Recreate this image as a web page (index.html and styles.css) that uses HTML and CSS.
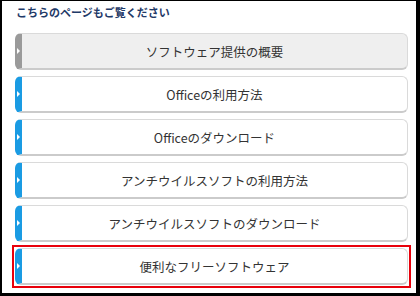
FILE: index.html
```html
<!DOCTYPE html>
<html lang="ja">
<head>
  <meta charset="UTF-8">
  <meta name="viewport" content="width=device-width, initial-scale=1.0">
  <title>こちらのページもご覧ください</title>
  <link rel="stylesheet" href="styles.css">
</head>
<body>
  <div class="frame">
    <h2 class="section-title">こちらのページもご覧ください</h2>
    <ul class="link-list">
      <li><a class="link-btn current" href="#">ソフトウェア提供の概要</a></li>
      <li><a class="link-btn" href="#">Officeの利用方法</a></li>
      <li><a class="link-btn" href="#">Officeのダウンロード</a></li>
      <li><a class="link-btn" href="#">アンチウイルスソフトの利用方法</a></li>
      <li><a class="link-btn" href="#">アンチウイルスソフトのダウンロード</a></li>
      <li class="marked"><a class="link-btn" href="#">便利なフリーソフトウェア</a></li>
    </ul>
  </div>
</body>
</html>
```

FILE: styles.css
```css
:root {
  --tab: #1a9be3;
  --tab-current: #9a9a9a;
  --border: #dadada;
  --shadow: #cbcbcb;
  --text: #333333;
  --title: #1f3a68;
}

* {
  margin: 0;
  padding: 0;
  box-sizing: border-box;
}

body {
  font-family: "Noto Sans CJK JP", "Noto Sans", sans-serif;
  background: #ffffff;
  color: var(--text);
}

.frame {
  width: 420px;
  height: 296px;
  border-style: solid;
  border-color: #000000;
  border-width: 1px 4px 3px 2px;
  padding: 5px 8px 0 13px;
}

.section-title {
  font-size: 11px;
  font-weight: 700;
  line-height: 13px;
  color: var(--title);
  margin-left: 1px;
}

.link-list {
  list-style: none;
  display: flex;
  flex-direction: column;
  gap: 6px;
  margin-top: 14px;
}

.link-btn {
  position: relative;
  display: flex;
  align-items: center;
  justify-content: center;
  height: 37px;
  background: #ffffff;
  border: 1px solid var(--border);
  border-bottom: 2px solid var(--shadow);
  border-left: 7px solid var(--tab);
  border-radius: 6px;
  font-size: 12.5px;
  color: var(--text);
  text-decoration: none;
  padding-top: 1px;
}

.link-btn::before {
  content: "";
  position: absolute;
  left: -5px;
  top: 50%;
  margin-top: -3px;
  border-style: solid;
  border-width: 3px 0 3px 3px;
  border-color: transparent transparent transparent #ffffff;
}

.link-btn.current {
  background: #efefef;
  border-left-color: var(--tab-current);
}

.marked {
  border: 2px solid #e8000b;
  padding: 1px;
  margin: -3px;
}
```
